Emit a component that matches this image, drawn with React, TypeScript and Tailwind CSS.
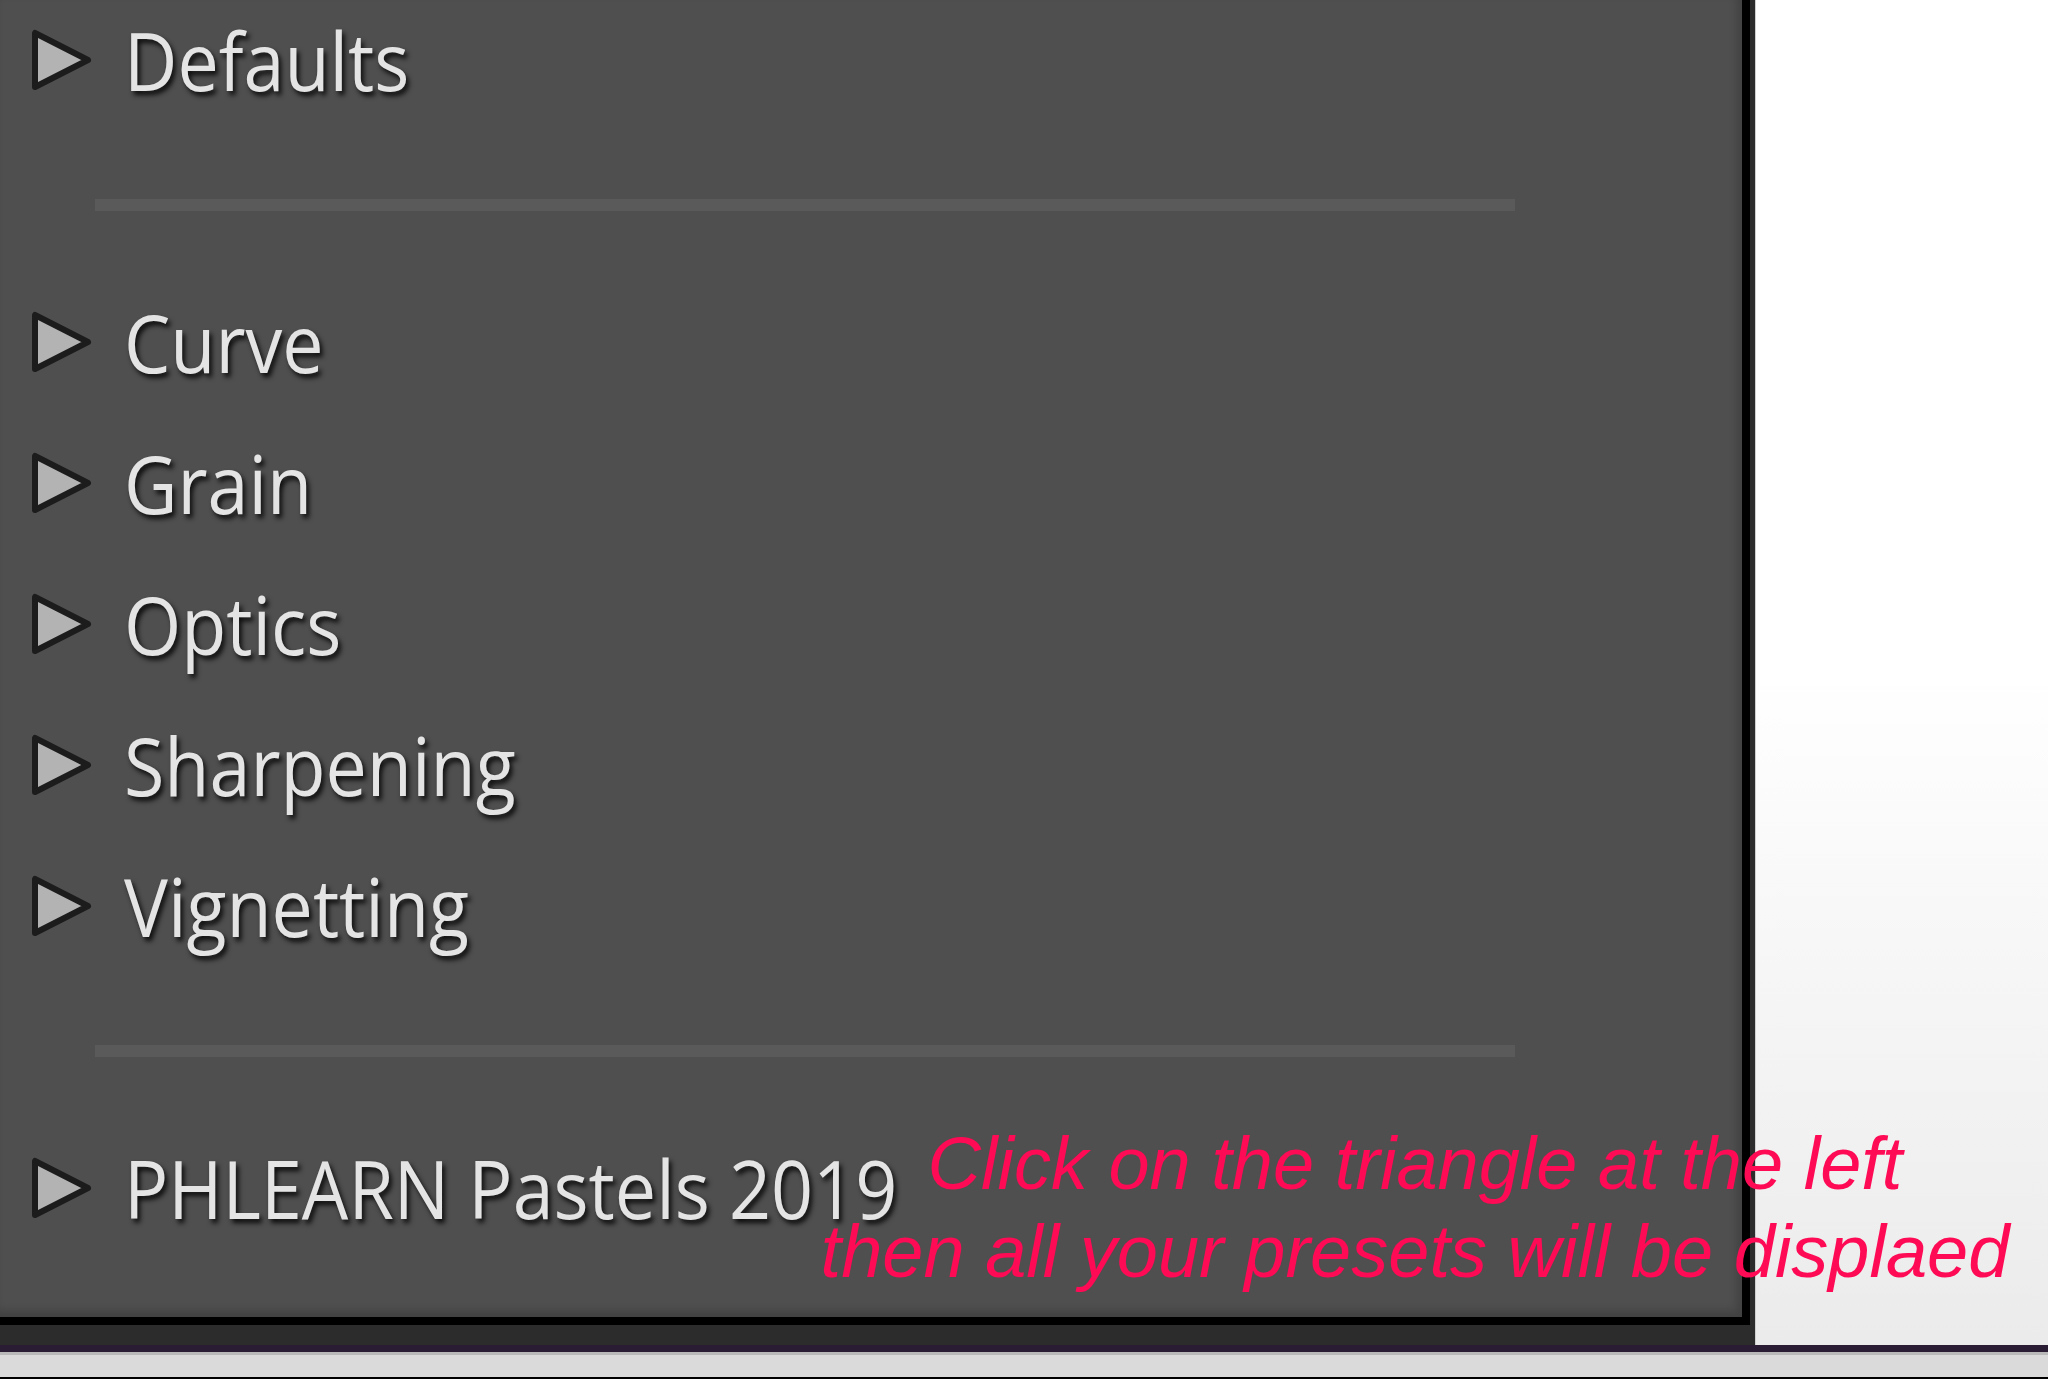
import React from "react";

const Tri = () => (
  <svg width="66" height="66" viewBox="0 0 66 66" className="shrink-0">
    <polygon
      points="6,6 6,60 59,33"
      fill="#b3b3b3"
      stroke="#1c1c1c"
      strokeWidth="6"
      strokeLinejoin="round"
    />
  </svg>
);

const Row = ({ label }: { label: string }) => (
  <div className="h-[141px] flex items-center pl-[29px]">
    <Tri />
    <span
      className="ml-[29px] inline-block origin-left scale-x-[0.92] text-[80px] leading-none text-[#e4e4e4] tracking-normal whitespace-nowrap [text-shadow:3px_4px_5px_rgba(0,0,0,0.85)]"
      style={{ fontFamily: '"Open Sans", "Noto Sans", sans-serif' }}
    >
      {label}
    </span>
  </div>
);

const Sep = () => (
  <div className="h-[141px] pt-[69px]">
    <div className="ml-[95px] w-[1420px] h-[12px] bg-[#5a5a5a]" />
  </div>
);

export default function App() {
  return (
    <div className="relative w-[2048px] h-[1379px] overflow-hidden flex flex-col bg-[#dadada]">
      <div className="flex h-[1345px] shrink-0">
        <div className="w-[1755px] h-full bg-[#2c2c2c] shrink-0">
          <div className="w-[1750px] h-[1325px] border-r-[8px] border-b-[8px] border-black">
            <div className="w-full h-full bg-[#4f4f4f] overflow-hidden shadow-[inset_-5px_-6px_8px_rgba(0,0,0,0.18)]">
              <div className="-mt-[11px] flex flex-col">
                <Row label="Defaults" />
                <Sep />
                <Row label="Curve" />
                <Row label="Grain" />
                <Row label="Optics" />
                <Row label="Sharpening" />
                <Row label="Vignetting" />
                <Sep />
                <Row label="PHLEARN Pastels 2019" />
              </div>
            </div>
          </div>
        </div>
        <div className="flex-1 h-full border-l border-[#cfcfcf] bg-gradient-to-b from-white via-white to-[#ebebeb]" />
      </div>
      <div className="h-[7px] bg-[#2a1d33] shrink-0" />
      <div className="h-[3px] bg-[#b9b9b9] shrink-0" />
      <div className="flex-1 bg-[#dadada]" />
      <div className="h-[2px] bg-black shrink-0" />

      <div
        className="absolute left-[765px] top-[1120px] w-[1300px] text-center italic text-[74px] leading-[88px] text-[#ff0a55] whitespace-nowrap"
        style={{ fontFamily: '"Liberation Sans", Arial, sans-serif' }}
      >
        <div>Click on the triangle at the left</div>
        <div>then all your presets will be displaed</div>
      </div>
    </div>
  );
}
